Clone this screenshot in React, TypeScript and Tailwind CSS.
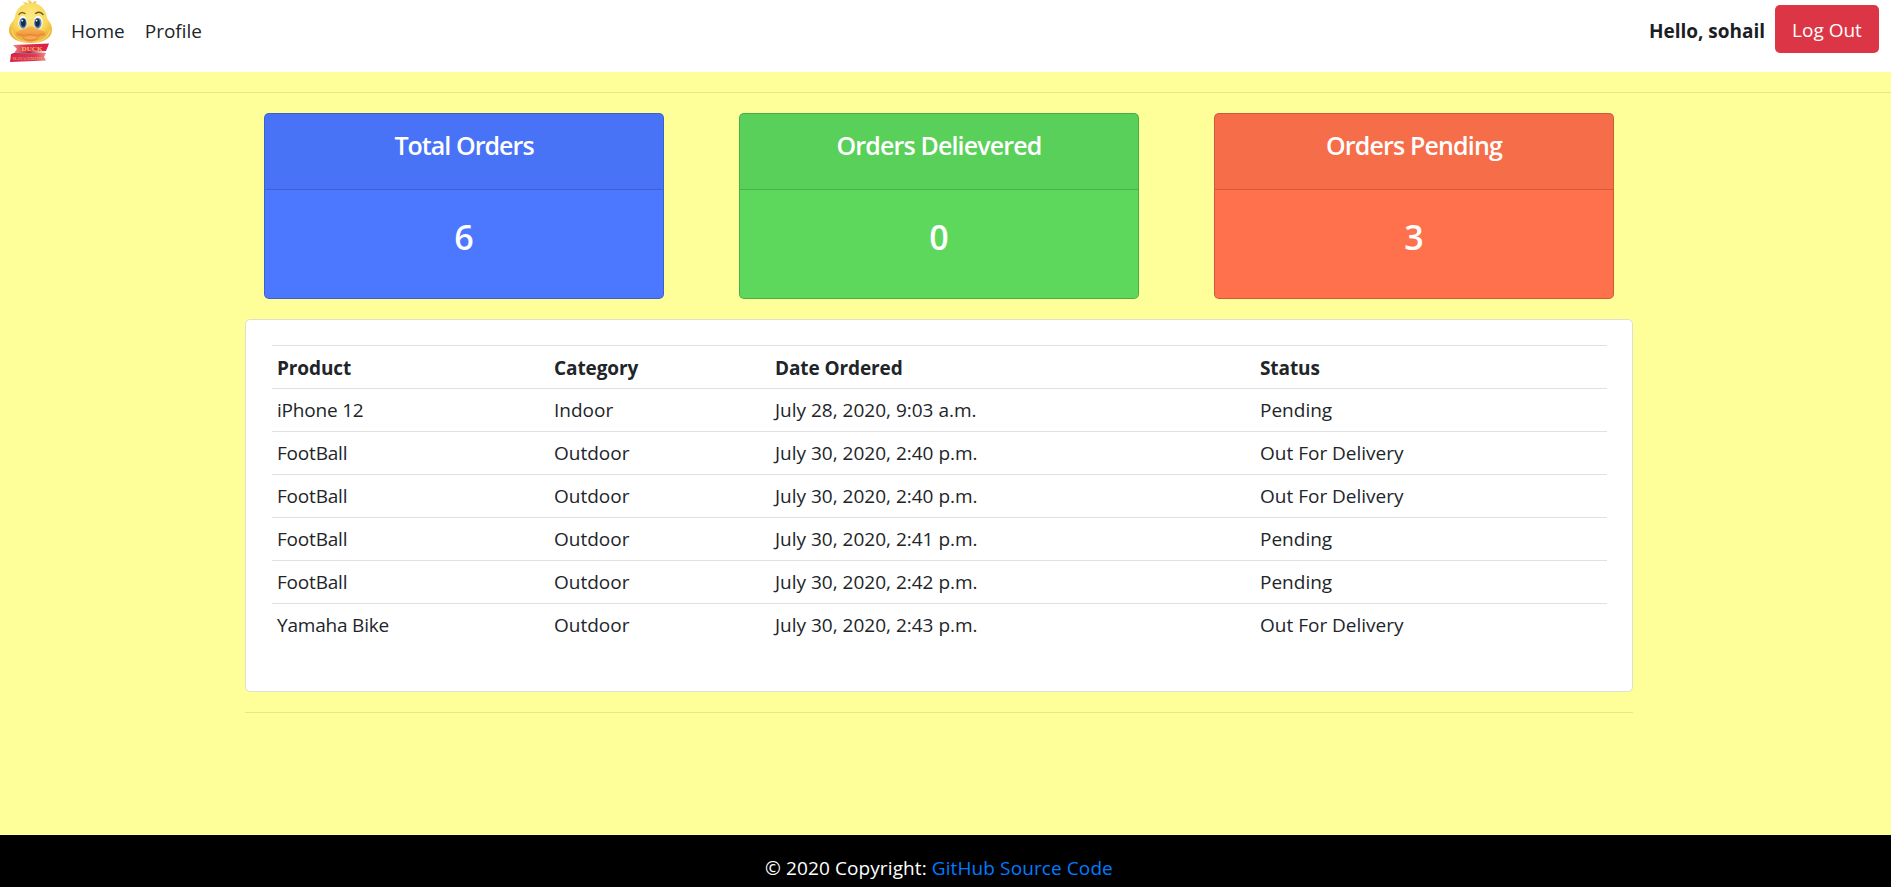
const FONT = "font-['Open_Sans','Noto_Sans',sans-serif]";

type Stat = { title: string; value: number; color: string; spacing: string };

const stats: Stat[] = [
  { title: "Total Orders", value: 6, color: "bg-[#4c78ff]", spacing: "tracking-[-0.95px]" },
  { title: "Orders Delievered", value: 0, color: "bg-[#5dd85d]", spacing: "tracking-[-0.85px]" },
  { title: "Orders Pending", value: 3, color: "bg-[#ff714d]", spacing: "tracking-[-0.85px]" },
];

const orders = [
  ["iPhone 12", "Indoor", "July 28, 2020, 9:03 a.m.", "Pending"],
  ["FootBall", "Outdoor", "July 30, 2020, 2:40 p.m.", "Out For Delivery"],
  ["FootBall", "Outdoor", "July 30, 2020, 2:40 p.m.", "Out For Delivery"],
  ["FootBall", "Outdoor", "July 30, 2020, 2:41 p.m.", "Pending"],
  ["FootBall", "Outdoor", "July 30, 2020, 2:42 p.m.", "Pending"],
  ["Yamaha Bike", "Outdoor", "July 30, 2020, 2:43 p.m.", "Out For Delivery"],
];

function DuckLogo() {
  return (
    <svg width="46" height="64" viewBox="0 0 46 64" className="block shrink-0">
      <defs>
        <radialGradient id="face" cx="0.5" cy="0.35" r="0.65">
          <stop offset="0" stopColor="#fdeb86" />
          <stop offset="0.6" stopColor="#f9d95c" />
          <stop offset="1" stopColor="#eba92f" />
        </radialGradient>
        <linearGradient id="bill" x1="0" y1="0" x2="0" y2="1">
          <stop offset="0" stopColor="#fbb655" />
          <stop offset="1" stopColor="#ec8431" />
        </linearGradient>
        <linearGradient id="ribbonTop" x1="0" y1="0" x2="1" y2="0">
          <stop offset="0" stopColor="#f0837c" />
          <stop offset="0.35" stopColor="#de2f50" />
          <stop offset="1" stopColor="#d91f49" />
        </linearGradient>
        <linearGradient id="ribbonLow" x1="0" y1="0" x2="1" y2="0">
          <stop offset="0" stopColor="#da2049" />
          <stop offset="0.7" stopColor="#dd3a57" />
          <stop offset="1" stopColor="#ef8a84" />
        </linearGradient>
      </defs>
      <path d="M17 7C17 4 15 3 13.500 2.500C17 2 19 3 20 4C20 2 19 .5 18.500 0C22 .5 23 2 23.500 3.500C24 2 26 1 28 1.500C26 3 26 5 27 7Z" fill="#f1ca55" />
      <path d="M22 3C31 3 37 9 38 18C39 21 43 23 43 29C43 39 33 43 22 43S0 39 0 30C0 24 5 21 6 17C7 9 13 3 22 3Z" fill="url(#face)" />
      <path d="M3 30C4 39 12 42 22 42S39 39 41 30" fill="none" stroke="#fbe684" strokeWidth="1.500" opacity="0.6" />
      <path d="M10 14.500Q12 11.500 16 13.500M26.500 13.500Q31 10.500 34 14.500" fill="none" stroke="#6b5128" strokeWidth="1.300" strokeLinecap="round" />
      <ellipse cx="13.800" cy="22.500" rx="4.600" ry="6.800" fill="#fffbe8" />
      <ellipse cx="29.200" cy="22.500" rx="4.600" ry="6.800" fill="#fffbe8" />
      <ellipse cx="14" cy="23.200" rx="3.700" ry="5.500" fill="#5d88bb" />
      <ellipse cx="28.800" cy="23.200" rx="3.700" ry="5.500" fill="#5d88bb" />
      <ellipse cx="14.300" cy="22.800" rx="2.300" ry="4" fill="#192a49" />
      <ellipse cx="28.500" cy="22.800" rx="2.300" ry="4" fill="#192a49" />
      <circle cx="13.300" cy="20.600" r="0.900" fill="#fff" />
      <circle cx="27.600" cy="20.600" r="0.900" fill="#fff" />
      <path d="M7 33C9 29.500 15 30 18 27.500Q21.500 25 25 27.500C28 30 34 29.500 36.500 33C37.500 35.500 34 36.500 31 36.500C28 40.500 25 41.500 21.500 41.500S15 40.500 12 36.500C9 36.500 6 35.500 7 33Z" fill="url(#bill)" />
      <path d="M8.500 34Q15 36.500 21.500 34.500Q28 36.500 35 34" fill="none" stroke="#dc8230" strokeWidth="0.900" />
      <path d="M14 37.500Q21.500 35 29 37.500Q22 41.500 14 37.500Z" fill="#f7aa55" />
      <path d="M4 45L40 43.500L37 51L5 53L8 49Z" fill="url(#ribbonTop)" />
      <path d="M2 54L37 53L35 57L37 60.500L1 62Z" fill="url(#ribbonLow)" />
      <path d="M5 53L20 52.100L37 53L2 54Z" fill="#8c2149" />
      <text x="23" y="50.600" textAnchor="middle" fontFamily="Liberation Serif, serif" fontWeight="700" fontSize="7" textLength="21" lengthAdjust="spacingAndGlyphs" fill="#f4c24e">DUCK</text>
      <text x="18.500" y="59.500" textAnchor="middle" fontFamily="Liberation Serif, serif" fontSize="4.500" textLength="30" lengthAdjust="spacingAndGlyphs" fill="#f0b060">MANAGEMENT</text>
    </svg>
  );
}

function Navbar() {
  return (
    <header className="flex h-[72px] items-start justify-between bg-white pr-3 pl-[9px]">
      <div className="flex">
        <DuckLogo />
        <nav className="flex gap-5 pt-[18px] pl-4 leading-[26px] text-[#212529]">
          <a href="#">Home</a>
          <a href="#">Profile</a>
        </nav>
      </div>
      <div className="flex pt-[5px]">
        <span className="mt-[13px] mr-2.5 leading-[26px] font-bold tracking-[-0.02px] text-[#1b1f23]">Hello, sohail</span>
        <button className="h-12 w-[104px] rounded-[5px] bg-[#dc3545] pt-0.5 text-white">Log Out</button>
      </div>
    </header>
  );
}

function StatCard({ title, value, color, spacing }: Stat) {
  return (
    <section className={`h-[186px] w-[400px] rounded-[5px] border border-black/20 text-center text-white ${color}`}>
      <div className="h-[76px] border-b border-black/15 bg-black/[0.035] pt-3.5">
        <h5 className={`text-[25px] leading-[34px] font-semibold ${spacing}`}>{title}</h5>
      </div>
      <h3 className="pt-[26px] text-[34px] leading-[42px] font-semibold">{value}</h3>
    </section>
  );
}

function OrdersTable() {
  return (
    <section className="mt-5 h-[373px] rounded-[5px] border border-[#dfdfd0] bg-white pt-[25px] pr-[25px] pl-[26px]">
      <table className="w-full table-fixed border-collapse text-left text-[#212529]">
        <colgroup>
          <col className="w-[277px]" />
          <col className="w-[221px]" />
          <col className="w-[485px]" />
          <col />
        </colgroup>
        <thead>
          <tr className="h-[43px] border-t border-[#dee2e6]">
            {["Product", "Category", "Date Ordered", "Status"].map((h) => (
              <th key={h} className="px-[5px] pt-0.5 pb-0 font-bold tracking-[-0.1px]">{h}</th>
            ))}
          </tr>
        </thead>
        <tbody>
          {orders.map((row, i) => (
            <tr key={i} className="h-[43px] border-t border-[#dee2e6]">
              {row.map((cell, j) => (
                <td key={j} className={`px-[5px] py-0 ${j === 0 ? "tracking-[-0.2px]" : ""}`}>{cell}</td>
              ))}
            </tr>
          ))}
        </tbody>
      </table>
    </section>
  );
}

export default function App() {
  return (
    <div className={`flex h-[887px] flex-col overflow-hidden bg-[#ffff99] text-[19px] ${FONT}`}>
      <Navbar />
      <div className="mt-5 h-px shrink-0 bg-[#e6e68a]" />
      <main className="ml-[245px] w-[1388px] pt-5">
        <div className="flex justify-between pr-[19px] pl-[19px]">
          {stats.map((s) => (
            <StatCard key={s.title} {...s} />
          ))}
        </div>
        <OrdersTable />
        <div className="mt-5 h-px bg-[#e6e68a]" />
      </main>
      <footer className="mt-auto h-[52px] shrink-0 bg-black pt-5 text-center leading-[27px] text-white">
        <span className="mr-[13px] tracking-[0.1px]">
          © 2020 Copyright: <a href="#" className="text-[#007bff]">GitHub Source Code</a>
        </span>
      </footer>
    </div>
  );
}
